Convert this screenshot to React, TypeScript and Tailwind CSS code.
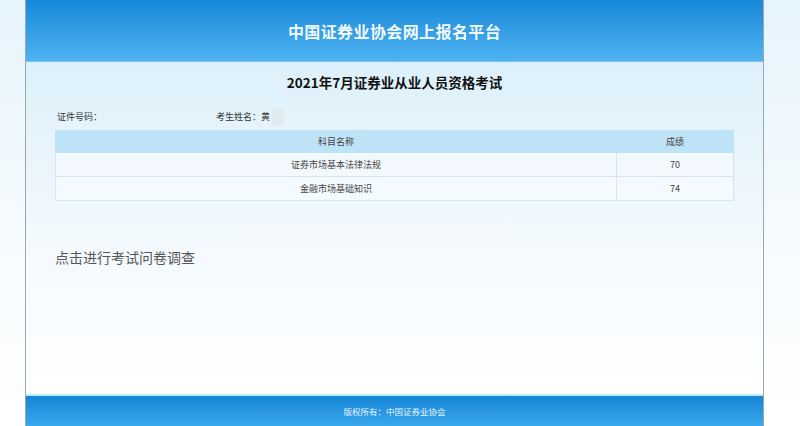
export default function App() {
  const rows = [
    { name: "证券市场基本法律法规", score: "70" },
    { name: "金融市场基础知识", score: "74" },
  ]

  return (
    <div
      className="h-[426px] w-[800px] overflow-hidden bg-gradient-to-b from-[#e6f4fc] via-[#f4fafd] to-white"
      style={{ fontFamily: '"Noto Sans CJK SC", "Liberation Sans", sans-serif' }}
    >
      <div className="ml-[25px] flex h-full w-[739px] flex-col border-x border-[#9aa8b0]">
        {/* Header */}
        <header className="flex h-[62px] shrink-0 items-center justify-center border-b border-[#7cc2ec] bg-gradient-to-b from-[#1588d8] to-[#4db3f2]">
          <h1 className="text-[16px] font-bold tracking-wide text-white/95">中国证券业协会网上报名平台</h1>
        </header>

        {/* Content */}
        <main className="flex-1 bg-gradient-to-b from-[#dcf0fb] via-[#f2f9fd] to-white px-[29px]">
          <h2 className="mt-[10px] text-center text-[13.5px] font-bold leading-[20px] text-[#111]">
            2021年7月证券业从业人员资格考试
          </h2>

          <div className="mt-[17px] flex items-center text-[9px] leading-[12px] text-[#333]">
            <span className="ml-[2px] w-[159px]">证件号码：</span>
            <span>考生姓名：黄</span>
            <span className="ml-[2px] h-[16px] w-[12px] bg-[#dfe6ea]/70" />
          </div>

          <table className="mt-[5px] w-[679px] border-collapse text-[9px] text-[#444]">
            <thead>
              <tr className="h-[22px] bg-[#bfe3f6]">
                <th className="border border-[#bfe3f6] font-normal">科目名称</th>
                <th className="w-[117px] border border-[#bfe3f6] font-normal">成绩</th>
              </tr>
            </thead>
            <tbody>
              {rows.map((r) => (
                <tr key={r.name} className="h-[24px] bg-white/40">
                  <td className="border border-[#d7e6ee] text-center">{r.name}</td>
                  <td className="border border-[#d7e6ee] text-center">{r.score}</td>
                </tr>
              ))}
            </tbody>
          </table>

          <p className="mt-[46px] text-[14px] leading-[20px] text-[#555]">点击进行考试问卷调查</p>
        </main>

        {/* Footer */}
        <footer className="flex h-[32px] shrink-0 items-center justify-center border-t-2 border-[#b9ecfb] bg-gradient-to-b from-[#1384d6] to-[#3aa8ec]">
          <span className="text-[8.5px] text-white/90">版权所有：中国证券业协会</span>
        </footer>
      </div>
    </div>
  )
}
